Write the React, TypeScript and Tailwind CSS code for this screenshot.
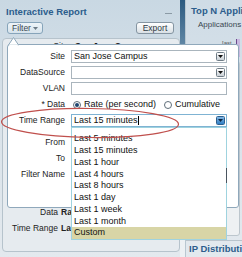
import React from "react";

function DropBtn({ active = false }: { active?: boolean }) {
  return (
    <div
      className={
        active
          ? "w-[9px] h-[9px] rounded-[1.5px] border border-[#2d5f8e] bg-gradient-to-b from-[#7fb6e4] to-[#2f7fc4] flex items-center justify-center"
          : "w-[9px] h-[9px] rounded-[1.5px] border border-[#6f7c86] bg-gradient-to-b from-[#ffffff] to-[#c9d0d5] flex items-center justify-center"
      }
    >
      <svg width="5" height="3" viewBox="0 0 5 3">
        <polygon points="0,0 5,0 2.5,3" fill={active ? "#0d2440" : "#111"} />
      </svg>
    </div>
  );
}

function Row({ label, children, mb = "mb-[3px]" }: { label: string; children?: React.ReactNode; mb?: string }) {
  return (
    <div className={`flex items-center h-[13px] ${mb}`}>
      <div className="w-[57px] text-right text-[8.5px] leading-none text-[#222]">{label}</div>
      <div className="ml-[6px] w-[156px] h-[13px] flex items-center">{children}</div>
    </div>
  );
}

function Radio({ on }: { on?: boolean }) {
  return (
    <div className="w-[8px] h-[8px] rounded-full border border-[#5f6e79] bg-white flex items-center justify-center">
      {on && <div className="w-[4px] h-[4px] rounded-full bg-[#1f4670]" />}
    </div>
  );
}

export default function App() {
  const items = [
    "Last 5 minutes",
    "Last 15 minutes",
    "Last 1 hour",
    "Last 4 hours",
    "Last 8 hours",
    "Last 1 day",
    "Last 1 week",
    "Last 1 month",
    "Custom",
  ];
  return (
    <div className="relative w-[242px] h-[257px] overflow-hidden bg-[#edf1f4] [font-family:'Liberation_Sans',Arial,sans-serif]">
      <div className="flex h-full">
        {/* left panel */}
        <div className="w-[180px] flex flex-col bg-gradient-to-b from-[#c9d8e3] via-[#dae3ea] to-[#e3e9ee]">
          <div className="h-[20px] flex items-center justify-between pl-[6px] pr-[8px] pt-[4px]">
            <span className="text-[9.5px] font-bold text-[#2c5d8c] leading-none">Interactive Report</span>
            <span className="w-[7px] h-[1px] bg-[#8b9aa5] mt-[2px]" />
          </div>
          <div className="flex justify-between items-center pl-[7px] pr-[6px] h-[12px] mt-[2px]">
            <div className="w-[36px] h-[12px] rounded-[3px] border border-[#86a4ba] bg-gradient-to-b from-[#eef4f8] to-[#d6e3ec] flex items-center justify-center gap-[2px]">
              <span className="text-[8.5px] text-[#3b4852] leading-none">Filter</span>
              <svg width="5" height="3" viewBox="0 0 5 3">
                <polygon points="0,0 5,0 2.5,3" fill="#6b7a85" />
              </svg>
            </div>
            <div className="w-[38px] h-[12px] rounded-[3px] border border-[#8595a2] bg-gradient-to-b from-[#ffffff] to-[#d9e0e5] flex items-center justify-center">
              <span className="text-[8.5px] text-[#2f3a42] leading-none">Export</span>
            </div>
          </div>
          <div className="mt-[4px] ml-[2px] mb-[5px] flex-1 flex flex-col border border-[#b6c3cc] rounded-[4px] bg-[#e6ebef]">
            <div className="flex items-center pt-[2px] h-[12px]">
              <span className="w-[65px] text-right text-[8.5px] text-[#222] leading-none">Site</span>
              <span className="ml-[7px] text-[8.5px] font-bold text-[#222] leading-none">San Jose Campus</span>
            </div>
            <div className="flex-1" />
            <div className="flex items-center h-[11px]">
              <span className="w-[55px] text-right text-[8.5px] text-[#222] leading-none">Data</span>
              <span className="ml-[3px] text-[8.5px] font-bold text-[#222] leading-none">Ra</span>
            </div>
            <div className="flex items-center h-[11px] mt-[5px] mb-[17px]">
              <span className="w-[55px] text-right text-[8.5px] text-[#222] leading-none">Time Range</span>
              <span className="ml-[3px] text-[8.5px] font-bold text-[#222] leading-none">La</span>
            </div>
          </div>
        </div>
        {/* splitter */}
        <div className="w-[5px] flex flex-col">
          <div className="h-[44px] bg-gradient-to-b from-[#2b5a80] to-[#5f86a4]" />
        </div>
        {/* right panel */}
        <div className="flex-1 flex flex-col bg-gradient-to-b from-[#cfdce6] to-[#e3e9ee] border-l border-[#b9c7d1] min-w-0 overflow-hidden">
          <div className="h-[20px] flex items-center pl-[5px] pt-[2px] whitespace-nowrap">
            <span className="text-[9.5px] font-bold text-[#2c5d8c] leading-none">Top N Appli</span>
          </div>
          <div className="pl-[12px] text-[8px] text-[#3a4750] leading-none mt-[1px] whitespace-nowrap">Applications</div>
          <div className="flex items-start mt-[6px] pl-[36px] gap-[4px]">
            <span className="text-[6px] text-[#555] leading-none mt-[5px]">[ast</span>
            <div className="w-[4px] h-[18px] mt-[4px] border-l border-[#6b4a8c] bg-[#c9b9e0]" />
          </div>
          <div className="flex-1 mx-[2px] mt-[4px] mb-[4px] border border-[#bcc6cd] rounded-[3px] bg-[#eef1f3]" />
          <div className="h-[17px] shrink-0 border-t border-[#b9c4cc] pl-[3px] pt-[3px] flex items-start whitespace-nowrap">
            <span className="text-[9.5px] font-bold text-[#2c5d8c] leading-none">IP Distributi</span>
          </div>
        </div>
      </div>

      {/* filter popup */}
      <div className="absolute left-[7px] top-[44px] w-[232px] h-[164px] bg-white border border-[#8fa8bb] rounded-[3px] pt-[5px]">
        <Row label="Site">
          <div className="w-full h-full border border-[#aab5bd] flex items-center justify-between pl-[2px] pr-[1px]">
            <span className="text-[9px] text-[#111] leading-none">San Jose Campus</span>
            <DropBtn />
          </div>
        </Row>
        <Row label="DataSource">
          <div className="w-full h-full border border-[#aab5bd] flex items-center justify-end pr-[1px]">
            <DropBtn />
          </div>
        </Row>
        <Row label="VLAN">
          <div className="w-full h-full border border-[#aab5bd]" />
        </Row>
        <Row label="* Data">
          <div className="flex items-center h-full pl-[2px]">
            <Radio on />
            <span className="ml-[3px] text-[9px] text-[#111] leading-none">Rate (per second)</span>
            <div className="ml-[8px]">
              <Radio />
            </div>
            <span className="ml-[3px] text-[9px] text-[#111] leading-none">Cumulative</span>
          </div>
        </Row>
        <Row label="Time Range" mb="mb-[9px]">
          <div className="w-full h-full border border-[#7fb3d3] flex items-center justify-between pl-[2px] pr-[1px]">
            <span className="flex items-center">
              <span className="text-[9px] text-[#111] leading-none">Last 15 minutes</span>
              <span className="w-[1px] h-[9px] bg-black" />
            </span>
            <DropBtn active />
          </div>
        </Row>
        <Row label="From" />
        <Row label="To" />
        <Row label="Filter Name" />
      </div>
      {/* popup caret */}
      <svg className="absolute left-[8px] top-[37px]" width="12" height="9" viewBox="0 0 12 9">
        <polygon points="0.5,8 5.5,0.5 10.5,8" fill="#ffffff" stroke="#8fa8bb" strokeWidth="1" />
        <rect x="1.2" y="7.5" width="8.6" height="1.5" fill="#ffffff" />
      </svg>

      {/* dropdown list */}
      <div className="absolute left-[71px] top-[127px] w-[156px] h-[113px] bg-white border border-[#9fd3df] pt-[5px]">
        {items.map((t) => (
          <div
            key={t}
            className={
              "h-[11.75px] flex items-center pl-[2px] text-[9px] text-[#111] leading-none " +
              (t === "Custom" ? "bg-[#d8d5a6]" : "")
            }
          >
            {t}
          </div>
        ))}
        <div className="absolute right-[-1px] top-[40px] w-[1px] h-[15px] bg-[#4a5560]" />
      </div>

      {/* annotation ellipse */}
      <svg className="absolute left-0 top-0 pointer-events-none" width="242" height="257" viewBox="0 0 242 257">
        <ellipse cx="90" cy="123" rx="88.5" ry="14.5" fill="none" stroke="#c0504d" strokeWidth="1.2" transform="rotate(0.8 90 123)" />
      </svg>
    </div>
  );
}
